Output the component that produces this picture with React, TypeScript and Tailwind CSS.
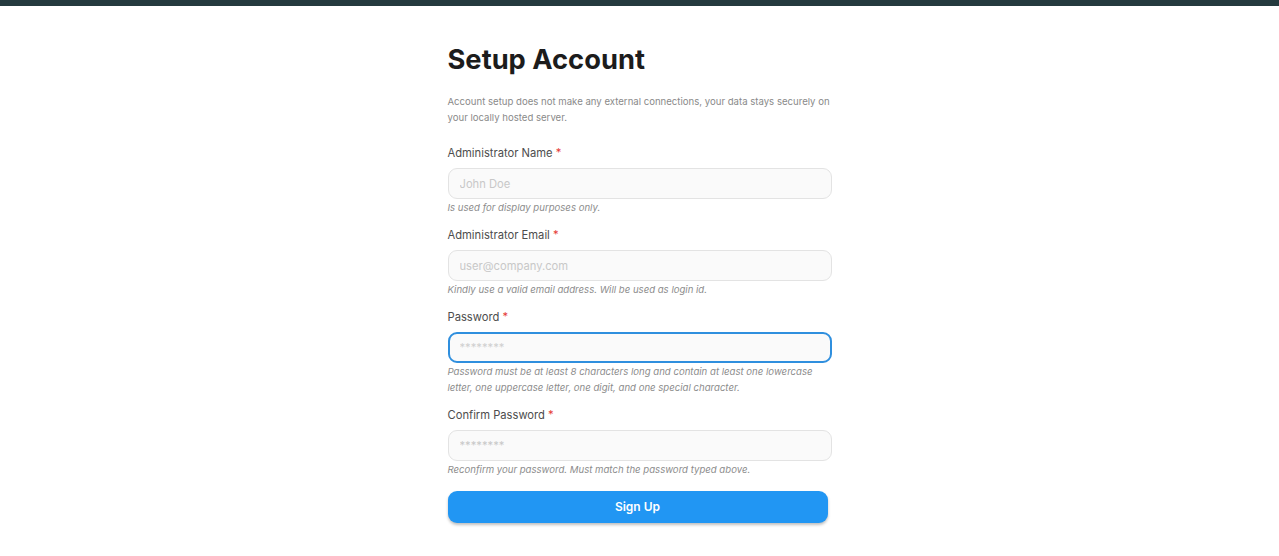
import React from 'react';

const fields = [
  {
    id: 'name',
    label: 'Administrator Name',
    placeholder: 'John Doe',
    help: 'Is used for display purposes only.',
  },
  {
    id: 'email',
    label: 'Administrator Email',
    placeholder: 'user@company.com',
    help: 'Kindly use a valid email address. Will be used as login id.',
  },
  {
    id: 'password',
    label: 'Password',
    placeholder: '********',
    help: 'Password must be at least 8 characters long and contain at least one lowercase letter, one uppercase letter, one digit, and one special character.',
    focused: true,
  },
  {
    id: 'confirm',
    label: 'Confirm Password',
    placeholder: '********',
    help: 'Reconfirm your password. Must match the password typed above.',
  },
];

const App = () => {
  return (
    <div className="min-h-screen bg-white font-['Inter',sans-serif]">
      <div className="h-[6px] bg-[#243a3e]" />

      <main className="flex justify-center pt-[37px]">
        <div className="w-96">
          {/* Heading */}
          <h1 className="text-[27.3px] leading-[34px] font-bold text-[#1c1c1c]">
            Setup Account
          </h1>
          <p className="mt-[17px] text-[9.6px] leading-4 text-[#8a8a8a]">
            Account setup does not make any external connections, your data stays securely on your locally hosted server.
          </p>

          {/* Fields */}
          <form className="mt-[19px] flex flex-col gap-[11px]" onSubmit={e => e.preventDefault()}>
            {fields.map(f => (
              <div key={f.id}>
                <label htmlFor={f.id} className="block text-[11.2px] leading-4 text-[#4d4d4d]">
                  {f.label} <span className="text-[#e53935]">*</span>
                </label>
                <input
                  id={f.id}
                  type="text"
                  placeholder={f.placeholder}
                  autoFocus={f.focused}
                  className={
                    f.focused
                      ? 'mt-[7px] block w-full h-[31px] rounded-[9px] border-2 border-[#2f8fde] bg-[#fafafa] px-[10px] text-[11.2px] text-[#333] placeholder:text-[#cfcfcf] outline-none'
                      : 'mt-[7px] block w-full h-[31px] rounded-[9px] border border-[#e3e3e3] bg-[#fafafa] px-[11px] text-[11.2px] text-[#333] placeholder:text-[#c8c8c8] outline-none'
                  }
                />
                <p className="mt-[1px] text-[9.6px] leading-4 italic text-[#8c8c8c]">{f.help}</p>
              </div>
            ))}

            <button
              type="submit"
              className="mt-[2px] h-[32px] w-[380px] rounded-[9px] bg-[#2196f3] text-[12px] font-semibold text-white shadow-[0_2px_3px_rgba(0,0,0,0.25)]"
            >
              Sign Up
            </button>
          </form>
        </div>
      </main>
    </div>
  );
};

export default App;
